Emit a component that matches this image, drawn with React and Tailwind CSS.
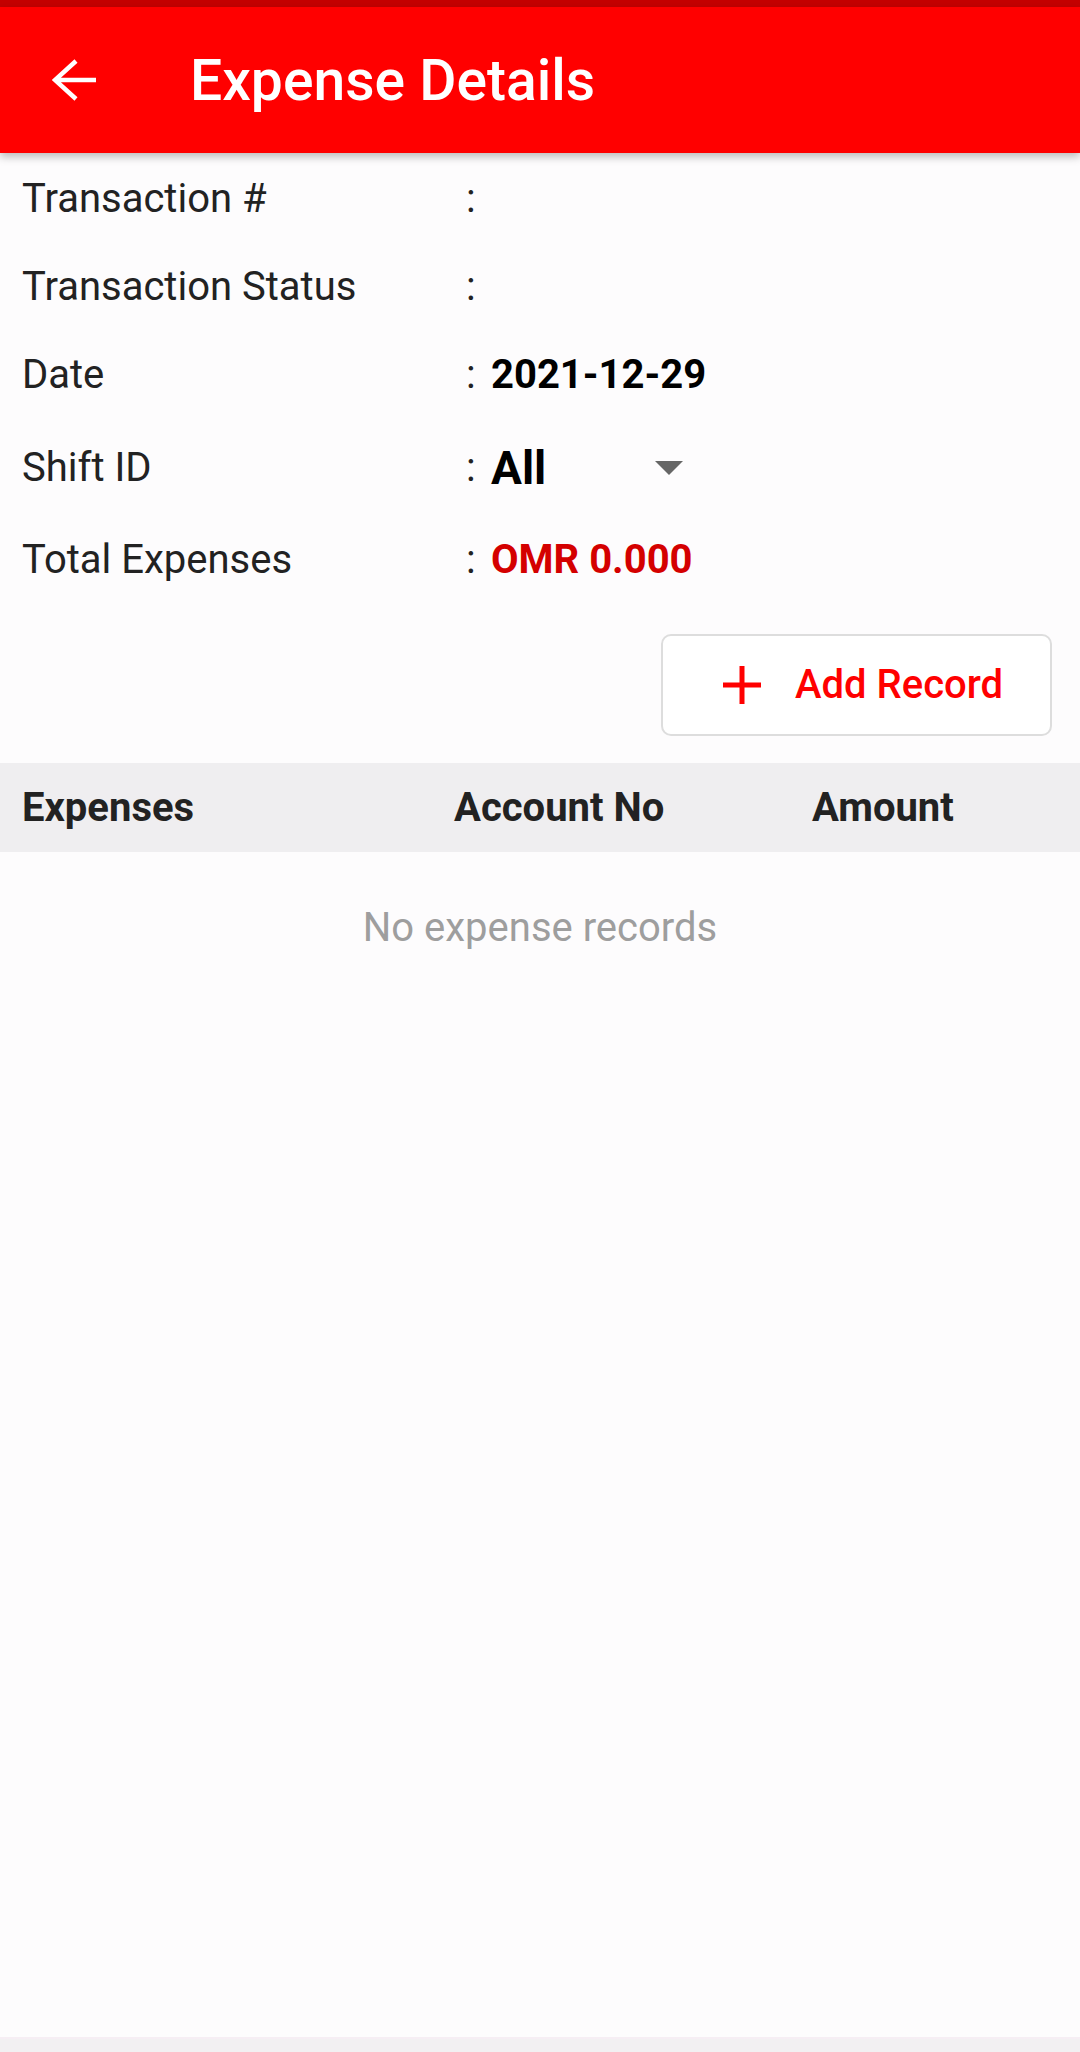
import React from "react";

const rows = [
  { label: "Transaction #", value: null, h: "h-[88px]" },
  { label: "Transaction Status", value: null, h: "h-[88px]" },
  { label: "Date", value: "date", h: "h-[88px]" },
  { label: "Shift ID", value: "shift", h: "h-[98px]" },
  { label: "Total Expenses", value: "total", h: "h-[86px]" },
];

function RowValue({ kind }) {
  if (kind === "date") {
    return <span className="text-[40px] font-bold text-black">2021-12-29</span>;
  }
  if (kind === "shift") {
    return (
      <span className="flex items-center">
        <span className="w-[164px] text-[46px] font-bold text-black">All</span>
        <svg width="28" height="14" viewBox="0 0 28 14">
          <path d="M0 0 L28 0 L14 14 Z" fill="#666666" />
        </svg>
      </span>
    );
  }
  if (kind === "total") {
    return <span className="text-[40px] font-bold text-[#d40000]">OMR 0.000</span>;
  }
  return null;
}

export default function App() {
  return (
    <div
      className="flex min-h-[2052px] w-[1080px] flex-col bg-[#fdfcfd] text-[#222222]"
      style={{ fontFamily: "Roboto, 'Noto Sans', sans-serif" }}
    >
      <div className="h-[7px] bg-[#c40000]" />
      <header className="relative z-10 flex h-[146px] items-center bg-[#ff0000] shadow-[0_4px_8px_rgba(0,0,0,0.25)]">
        <div className="flex w-[190px] pl-[52px]">
          <svg width="44" height="42" viewBox="0 0 44 42" fill="none">
            <path
              d="M44 21 H3 M24 2 L3 21 L24 40"
              stroke="white"
              strokeWidth="4.5"
            />
          </svg>
        </div>
        <h1 className="text-[57px] font-medium leading-none text-white">Expense Details</h1>
      </header>

      <section className="pt-[2px]">
        {rows.map((row) => (
          <div key={row.label} className={`flex items-center ${row.h}`}>
            <span className="w-[466px] pl-[22px] text-[40px] text-[#222222]">{row.label}</span>
            <span className="w-[25px] text-[40px] text-[#222222]">:</span>
            <RowValue kind={row.value} />
          </div>
        ))}
      </section>

      <div className="flex justify-end pr-[28px] pt-[31px]">
        <button
          type="button"
          className="flex h-[102px] w-[391px] items-center gap-[34px] rounded-[10px] border-2 border-[#dddddd] bg-white pl-[60px]"
        >
          <svg width="38" height="38" viewBox="0 0 38 38">
            <path d="M19 0 V38 M0 19 H38" stroke="#ff0000" strokeWidth="5" />
          </svg>
          <span className="text-[40px] font-medium text-[#ff0000]">Add Record</span>
        </button>
      </div>

      <div className="mt-[27px] flex h-[89px] items-center bg-[#efeef0] text-[40px] font-bold text-[#222222]">
        <span className="w-[454px] pl-[22px]">Expenses</span>
        <span className="w-[358px]">Account No</span>
        <span>Amount</span>
      </div>

      <p className="pt-[46px] text-center text-[40px] text-[#9e9e9e]">No expense records</p>

      <div className="flex-1" />
      <div className="h-[15px] border-t-2 border-[#f6eef4] bg-[#f2f0f2]" />
    </div>
  );
}
